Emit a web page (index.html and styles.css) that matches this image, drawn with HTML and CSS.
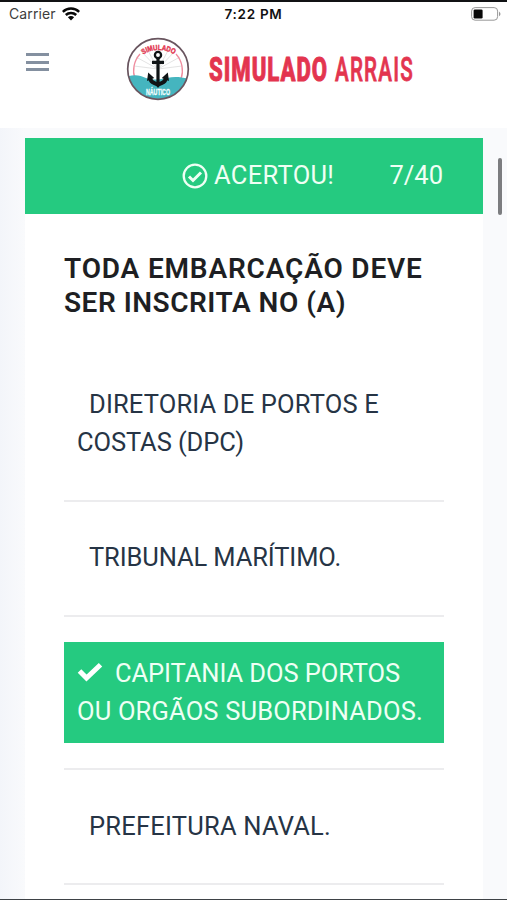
FILE: index.html
```html
<!DOCTYPE html>
<html lang="pt-BR">
<head>
<meta charset="utf-8">
<title>Simulado Arrais</title>
<link rel="stylesheet" href="styles.css">
</head>
<body>
<div class="screen">
  <div class="status">
    <div class="carrier"><span>Carrier</span>
      <svg width="18" height="14" viewBox="0 0 18 14" fill="none" stroke="#080808" stroke-width="2.5"><path d="M.8 4.9C5.3.5 12.7.5 17.2 4.9M3.8 8c2.9-2.8 7.5-2.8 10.4 0"/><path d="M5.9 10.2c1.7-1.7 4.5-1.7 6.2 0L9 13.4z" fill="#080808" stroke="none"/></svg>
    </div>
    <span class="clock">7:22 PM</span>
    <svg class="battery" width="30" height="14" viewBox="0 0 30 14"><rect x=".6" y=".6" width="26" height="12.6" rx="3.5" fill="#fff" stroke="#989898"/><rect x="2.6" y="2.5" width="9" height="9" rx="1.3" fill="#080808"/><path d="M28 4.5q3 2.4 0 4.8z" fill="#989898"/></svg>
  </div>
  <header class="header">
    <div class="menu"><i></i><i></i><i></i></div>
    <svg class="badge" width="64" height="64" viewBox="0 0 64 64">
      <defs><clipPath id="disc"><circle cx="32" cy="32" r="30"/></clipPath></defs>
      <circle cx="32" cy="32" r="30.2" fill="#fff"/>
      <g stroke="#dcdcdc" stroke-width=".8"><path d="M32 32 10 20M32 32 14 13M32 32 20 10M32 32 44 10M32 32 50 13M32 32 54 20M32 32 8 29M32 32 56 29"/></g>
      <path d="M9 42A25 25 0 0 1 14 17M50 17A25 25 0 0 1 55 42" fill="none" stroke="#ef8c9e" stroke-width="1.3"/>
      <path clip-path="url(#disc)" d="M0 40c8-3 14-2 20 1 8 3 15 1 21 0 8-2 14-1 23 1v24H0z" fill="#45b5bf"/>
      <path id="arc" d="M17 17.500Q32 8.500 49 17.500" fill="none"/>
      <text class="badge-top"><textPath href="#arc" textLength="33" lengthAdjust="spacingAndGlyphs">SIMULADO</textPath></text>
      <text class="badge-bottom" x="20" y="58" textLength="24" lengthAdjust="spacingAndGlyphs">NÁUTICO</text>
      <g fill="none" stroke="#101416"><circle cx="32" cy="18" r="3.1" stroke-width="2.300"/><path d="M32 21v26M26 25.300h12" stroke-width="3.200"/><path d="M24 40c0 5 4 6.300 8 7.500 4-1.200 8-2.500 8-7.500" stroke-width="4"/></g>
      <path d="m21 44 1.200-8.500 6 5.500zM43 44l-1.200-8.500-6 5.500zM29 47h6l-3 4z" fill="#101416"/>
      <circle cx="32" cy="32" r="30.300" fill="none" stroke="#69555f" stroke-width="1.700"/>
    </svg>
    <svg class="wordmark" width="210" height="46" viewBox="0 0 210 46" fill="#e3354f">
      <text class="brand-bold" x="1" y="33.500" textLength="119" lengthAdjust="spacingAndGlyphs">SIMULADO</text>
      <text class="brand-light" x="127" y="33.500" textLength="79" lengthAdjust="spacingAndGlyphs">ARRAIS</text>
    </svg>
  </header>
  <main class="main">
    <section class="card">
      <div class="result">
        <svg width="26" height="26" viewBox="0 0 26 26" fill="none" stroke="#effff4"><circle cx="13" cy="13" r="11.300" stroke-width="2.300"/><path d="m7 13.500 4 4 8-8" stroke-width="3"/></svg>
        <span class="verdict">ACERTOU!</span><span class="count">7/40</span>
      </div>
      <div class="body">
        <h1><span class="t1">TODA EMBARCAÇÃO DEVE</span><br><span class="t2">SER INSCRITA NO (A)</span></h1>
        <div class="option"><span class="indent a1">DIRETORIA DE PORTOS E</span><br><span class="a2">COSTAS (DPC)</span></div>
        <hr>
        <div class="option"><span class="indent b1">TRIBUNAL MARÍTIMO.</span></div>
        <hr>
        <div class="option low correct"><svg class="check" width="26" height="20" viewBox="0 0 26 20"><path d="m2.500 9 7 7L23.500 2.800" fill="none" stroke="#fff" stroke-width="5"/></svg><span class="c1">CAPITANIA DOS PORTOS</span><br><span class="c2">OU ORGÃOS SUBORDINADOS.</span></div>
        <hr>
        <div class="option low"><span class="indent d1">PREFEITURA NAVAL.</span></div>
        <hr>
      </div>
    </section>
    <div class="scrollbar"></div>
  </main>
</div>
</body>
</html>
```
FILE: styles.css
```css
* { box-sizing: border-box; }
body { margin: 0; background: #fff; font-family: Roboto, "Liberation Sans", sans-serif; }
.screen { height: 900px; display: flex; flex-direction: column; overflow: hidden; border-top: 2px solid #111214; border-bottom: 1px solid #3e4246; }
.status { height: 24px; flex: none; display: grid; grid-template-columns: 1fr auto 1fr; align-items: center; padding: 0 6px 0 9px; font: 14px/24px Inter, sans-serif; color: #3d3d3d; }
.carrier { display: flex; align-items: center; gap: 6px; letter-spacing: .1px; }
.clock { font-weight: 600; font-size: 13.500px; letter-spacing: .7px; margin: 0 3px 0 0; color: #111; }
.battery { justify-self: end; }
.header { height: 102px; flex: none; display: flex; align-items: flex-start; padding: 11px 0 0 26px; }
.menu { width: 23px; margin: 16px 77px 0 0; display: grid; gap: 4.500px; }
.menu i { height: 3px; background: #8490a0; }
.badge { margin-right: 18px; }
.wordmark { margin-top: 10px; }
.badge-top { font: 700 7.500px "Liberation Sans", sans-serif; fill: #e3354f; stroke: #e3354f; stroke-width: .4px; }
.badge-bottom { font: 700 9px "Liberation Sans", sans-serif; fill: #f5ffff; stroke: #f5ffff; stroke-width: .3px; }
.brand-bold { font: 800 34px Roboto, sans-serif; letter-spacing: 1.500px; stroke: #e3354f; stroke-width: 1px; }
.brand-light { font: 500 34px Roboto, sans-serif; letter-spacing: 2px; stroke: #e3354f; stroke-width: .8px; }
.main { flex: 1; min-height: 0; position: relative; padding: 10px 24px 0 25px; background: linear-gradient(90deg, #f3f5fa, #f9fafc 25px, #f9fafc); }
.card { height: 100%; background: #fff; }
.result { height: 76px; background: #25ca80; color: #effff4; display: flex; align-items: center; padding: 0 40px 0 157px; font-size: 25.500px; line-height: 76px; }
.verdict { margin: -2px 0 0 6px; letter-spacing: .3px; }
.count { margin: -2px 0 0 auto; }
.body { padding: 38px 39px 0; }
h1 { margin: 0 0 55px; font-size: 28px; line-height: 33.500px; font-weight: 600; color: #1e1f23; white-space: nowrap; }
.t1 { letter-spacing: .830px; }
.t2 { letter-spacing: .520px; }
.option { padding: 11px 13px 14px; font-size: 25.500px; line-height: 38px; color: #263445; white-space: nowrap; }
.option.low { padding: 12px 13px 13px; }
.indent { margin-left: 12px; }
.a1 { letter-spacing: .150px; }
.a2 { letter-spacing: -.100px; }
.b1 { letter-spacing: -.120px; }
.c1 { letter-spacing: -.080px; }
.c2 { letter-spacing: .160px; }
.d1 { letter-spacing: .220px; }
.correct { background: #25ca80; color: #effff4; }
.check { margin-right: 12px; }
hr { border: 0; height: 2px; margin: 25px 0; background: #ececee; }
.scrollbar { position: absolute; left: 498px; top: 30px; width: 4px; height: 57px; border-radius: 2px; background: #7c7d80; }
```
